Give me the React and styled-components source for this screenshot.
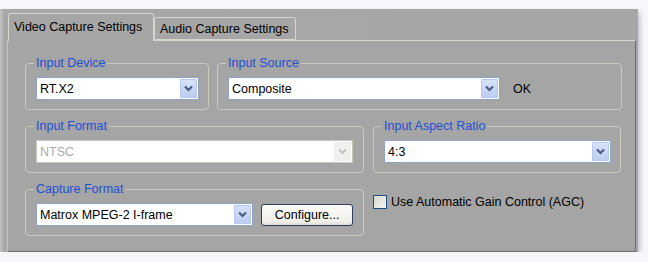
import React from 'react';
import styled, { createGlobalStyle } from 'styled-components';

const GlobalStyle = createGlobalStyle`
  body {
    margin: 0;
    background: #f7f7fb;
    font-family: "Liberation Sans", Arial, sans-serif;
    font-size: 12.5px;
  }
`;

const Chevron = ({ color }) => (
  <svg width="9" height="7" viewBox="0 0 9 7">
    <path d="M1 1.5 L4.5 5 L8 1.5" fill="none" stroke={color} strokeWidth="2.2" />
  </svg>
);

const Combo = ({ value, disabled, width }) => (
  <Select $disabled={disabled} style={{ width }}>
    <SelectText $disabled={disabled}>{value}</SelectText>
    <DropButton $disabled={disabled}>
      <Chevron color={disabled ? '#c4c4c4' : '#4a5c88'} />
    </DropButton>
  </Select>
);

const App = () => (
  <>
    <GlobalStyle />
    <Window>
      <TabStrip>
        <Tab $active>Video Capture Settings</Tab>
        <Tab>Audio Capture Settings</Tab>
      </TabStrip>
      <Panel>
        <Row>
          <Group $width={184}>
            <Legend>Input Device</Legend>
            <Combo value="RT.X2" width={163} />
          </Group>
          <Group $width={405}>
            <Legend>Input Source</Legend>
            <Line>
              <Combo value="Composite" width={272} />
              <Status>OK</Status>
            </Line>
          </Group>
        </Row>
        <Row $gap={9}>
          <Group $width={339}>
            <Legend>Input Format</Legend>
            <Combo value="NTSC" width={317} disabled />
          </Group>
          <Group $width={248}>
            <Legend>Input Aspect Ratio</Legend>
            <Combo value="4:3" width={227} />
          </Group>
        </Row>
        <Row $gap={9}>
          <Group $width={339}>
            <Legend>Capture Format</Legend>
            <Line>
              <Combo value="Matrox MPEG-2 I-frame" width={218} />
              <Button>Configure...</Button>
            </Line>
          </Group>
          <CheckRow>
            <Checkbox />
            <span>Use Automatic Gain Control (AGC)</span>
          </CheckRow>
        </Row>
      </Panel>
    </Window>
  </>
);

const Window = styled.div`
  margin-top: 9px;
  width: 638px;
  height: 243px;
  box-sizing: border-box;
  padding: 4px 0 0 7px;
  background: linear-gradient(90deg, #c4c4c4 0px, #a7a7a7 4px, #a6a6a6 100%);
  box-shadow: 2px 3px 5px rgba(60, 60, 80, 0.3);
  overflow: hidden;
`;

const TabStrip = styled.div`
  display: flex;
  align-items: flex-end;
  height: 27px;
  padding-left: 1px;
`;

const Tab = styled.div`
  position: relative;
  z-index: 1;
  box-sizing: border-box;
  width: ${(p) => (p.$active ? 146 : 142)}px;
  height: ${(p) => (p.$active ? 28 : 23)}px;
  margin-bottom: ${(p) => (p.$active ? -1 : 0)}px;
  padding: ${(p) => (p.$active ? '6px 0 0 5px' : '4px 0 0 5px')};
  background: #a6a6a6;
  color: #000;
  border: 1px solid #d6d6cc;
  border-bottom: ${(p) => (p.$active ? 'none' : '1px solid #d6d6cc')};
  border-radius: 2px 2px 0 0;
  white-space: nowrap;
`;

const Panel = styled.div`
  width: 629px;
  height: 212px;
  box-sizing: border-box;
  padding: 15px 13px 0 17px;
  background: #a5a5a5;
  border-top: 1px solid #d6d6cc;
  border-left: 1px solid #c4c4bc;
  border-right: 1px solid #6e6e6e;
  border-bottom: 1px solid #6e6e6e;
  display: flex;
  flex-direction: column;
  gap: 9px;
`;

const Row = styled.div`
  display: flex;
  gap: ${(p) => p.$gap || 8}px;
`;

const Group = styled.fieldset`
  width: ${(p) => p.$width}px;
  height: 54px;
  box-sizing: border-box;
  margin: 0;
  padding: 7px 10px 0 10px;
  border: 1px solid #cbcabd;
  border-radius: 4px;
  min-width: 0;
`;

const Legend = styled.legend`
  padding: 0 2px;
  margin-left: -2px;
  color: #1d50d6;
  line-height: 14px;
`;

const Line = styled.div`
  display: flex;
  align-items: center;
`;

const Select = styled.div`
  height: 23px;
  box-sizing: border-box;
  display: flex;
  align-items: center;
  background: #fff;
  border: 1px solid ${(p) => (p.$disabled ? '#c9c8bc' : '#8ea3c6')};
  padding: 1px;
`;

const SelectText = styled.div`
  flex: 1;
  padding-left: 2px;
  color: ${(p) => (p.$disabled ? '#ababab' : '#000')};
  white-space: nowrap;
`;

const DropButton = styled.div`
  width: 17px;
  height: 19px;
  display: flex;
  align-items: center;
  justify-content: center;
  border-radius: 1px;
  background: ${(p) =>
    p.$disabled ? '#f0f0ee' : 'linear-gradient(180deg, #d6e2f8 0%, #bccdf1 100%)'};
  border: 1px solid ${(p) => (p.$disabled ? '#ececea' : '#b7c8ec')};
  box-sizing: border-box;
`;

const Status = styled.span`
  margin-left: 13px;
  color: #000;
`;

const Button = styled.button`
  margin-left: 8px;
  width: 92px;
  height: 22px;
  padding: 0;
  font: inherit;
  color: #000;
  background: linear-gradient(180deg, #fbfbf8 0%, #efeee8 85%, #dcdbd2 100%);
  border: 1px solid #2b3f5e;
  border-radius: 3px;
`;

const CheckRow = styled.label`
  display: flex;
  align-items: center;
  gap: 4px;
  padding-top: 13px;
  height: 14px;
  color: #000;
  white-space: nowrap;
`;

const Checkbox = styled.span`
  width: 14px;
  height: 14px;
  box-sizing: border-box;
  border: 1px solid #1c4f80;
  background: linear-gradient(135deg, #d8d8d2 0%, #f4f4f2 100%);
`;

export default App;
